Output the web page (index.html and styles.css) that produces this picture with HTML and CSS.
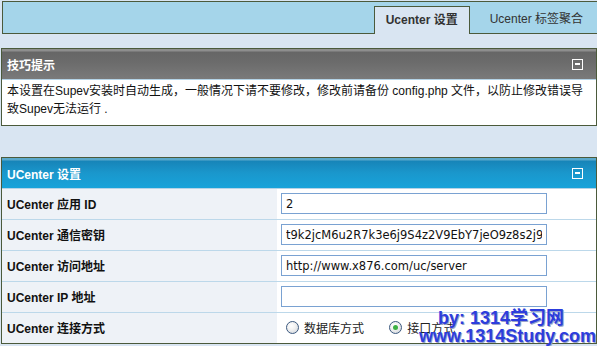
FILE: index.html
```html
<!DOCTYPE html>
<html lang="zh-CN">
<head>
  <meta charset="UTF-8" />
  <title>Ucenter 设置</title>
  <link rel="stylesheet" href="styles.css">
</head>
<body>

  <div class="topbar">
    <span class="tab active">Ucenter 设置</span>
    <span class="tab">Ucenter 标签聚合</span>
  </div>

  <div class="panel tips">
    <div class="panel-head">
      <span>技巧提示</span>
      <i class="fold"></i>
    </div>
    <div class="panel-body">
      本设置在Supev安装时自动生成，一般情况下请不要修改，修改前请备份 config.php 文件，以防止修改错误导<br>致Supev无法运行 .
    </div>
  </div>

  <div class="panel settings">
    <div class="panel-head">
      <span>UCenter 设置</span>
      <i class="fold"></i>
    </div>
    <table class="form-table">
      <tr>
        <th>UCenter 应用 ID</th>
        <td><input type="text" class="txt" value="2" /></td>
      </tr>
      <tr>
        <th>UCenter 通信密钥</th>
        <td><input type="text" class="txt" value="t9k2jcM6u2R7k3e6j9S4z2V9EbY7jeO9z8s2j9rds8b" /></td>
      </tr>
      <tr>
        <th>UCenter 访问地址</th>
        <td><input type="text" class="txt" value="http://www.x876.com/uc/server" /></td>
      </tr>
      <tr>
        <th>UCenter IP 地址</th>
        <td><input type="text" class="txt" value="" /></td>
      </tr>
      <tr>
        <th>UCenter 连接方式</th>
        <td>
          <label class="radio"><input type="radio" name="connect" /> 数据库方式</label>
          <label class="radio"><input type="radio" name="connect" checked /> 接口方式</label>
        </td>
      </tr>
    </table>
  </div>

  <div class="watermark">
    <div class="wm-by">by: 1314学习网</div>
    <div class="wm-url">www.1314Study.com</div>
  </div>

</body>
</html>
```

FILE: styles.css
```css
* {
  box-sizing: border-box;
  margin: 0;
  padding: 0;
}

body {
  font-family: "Liberation Sans", "Noto Sans CJK SC", sans-serif;
  font-size: 12px;
  color: #111;
  background-color: #d9e5f2;
  height: 346px;
  overflow: hidden;
  position: relative;
}

.topbar {
  margin: 1px 0 0 2px;
  height: 33px;
  background-color: #a5d5ea;
  border: 1px solid #4b5a3b;
  border-right: none;
  display: flex;
  justify-content: flex-end;
  align-items: flex-end;
}

.tab {
  height: 27px;
  line-height: 26px;
  padding: 0 14px 0 20px;
  color: #333;
  font-size: 12px;
}

.tab.active {
  width: 96px;
  height: 28px;
  padding: 0;
  margin-bottom: -1px;
  text-align: center;
  line-height: 27px;
  font-weight: bold;
  background-color: #d9e5f2;
  border: 1px solid #4b5a3b;
  border-bottom: none;
}

.panel {
  margin: 14px 0 0 1px;
  border: 1px solid #4b5a3b;
  border-right-width: 1px;
  background-color: #fff;
}

.panel-head {
  height: 31px;
  display: flex;
  align-items: center;
  justify-content: space-between;
  padding: 0 13px 0 5px;
  color: #fff;
  font-weight: bold;
  font-size: 12px;
  border-bottom: 1px solid #b4d3e6;
}

.tips .panel-head {
  background: linear-gradient(#8e8e8e 0, #8e8e8e 2px, #666 3px, #6c6c6c 14px, #7a7a7a 30px);
}

.settings {
  margin-top: 31px;
}

.settings .panel-head {
  background: linear-gradient(#5aa9cc 0, #5aa9cc 2px, #1784b8 3px, #1a97cc 15px, #17a3da 30px);
}

.fold {
  width: 11px;
  height: 11px;
  border: 1px solid #fff;
  position: relative;
  margin-top: 1px;
}

.fold::after {
  content: "";
  position: absolute;
  left: 2px;
  right: 2px;
  top: 3px;
  height: 2px;
  background-color: #fff;
}

.tips .panel-body {
  padding: 2px 6px 7px 5px;
  line-height: 18px;
  color: #111;
}

.form-table {
  width: 100%;
  border-collapse: collapse;
}

.form-table th,
.form-table td {
  height: 31px;
  border-top: 1px solid #bcd8ea;
  vertical-align: middle;
}

.form-table tr:first-child th,
.form-table tr:first-child td {
  border-top: none;
  height: 30px;
}

.form-table th {
  width: 275px;
  text-align: left;
  padding-left: 5px;
  background-color: #eef2f7;
  font-weight: bold;
}

.form-table td {
  padding-left: 4px;
  background-color: #fff;
}

.txt {
  width: 266px;
  height: 21px;
  border: 1px solid #7aa2d2;
  padding: 0 4px;
  font-family: "DejaVu Sans", sans-serif;
  font-size: 11.5px;
  color: #111;
  background-color: #fff;
  display: block;
}

.radio {
  display: inline-flex;
  align-items: center;
  gap: 5px;
  margin: 0 17px 0 5px;
  font-family: "Noto Sans CJK SC", sans-serif;
  font-size: 12px;
  color: #222;
}

.radio input {
  appearance: none;
  -webkit-appearance: none;
  width: 13px;
  height: 13px;
  border-radius: 50%;
  border: 1px solid #3d5a80;
  background: radial-gradient(circle at 40% 35%, #fff 0, #f2f2f2 40%, #c9cfd6 100%);
  position: relative;
}

.radio input:checked::after {
  content: "";
  position: absolute;
  left: 3px;
  top: 3px;
  width: 5px;
  height: 5px;
  border-radius: 50%;
  background-color: #3cb043;
}

.watermark {
  position: absolute;
  right: 1px;
  bottom: 0;
  font-family: "Liberation Sans", "Noto Sans CJK SC", sans-serif;
  font-weight: bold;
  color: #2c3ddd;
  text-shadow: 1px 1px 0 #9aa3c8;
  text-align: right;
  line-height: 16px;
}

.wm-by {
  font-size: 18px;
  padding-right: 32px;
}

.wm-url {
  font-size: 18px;
  line-height: 20px;
}
```
